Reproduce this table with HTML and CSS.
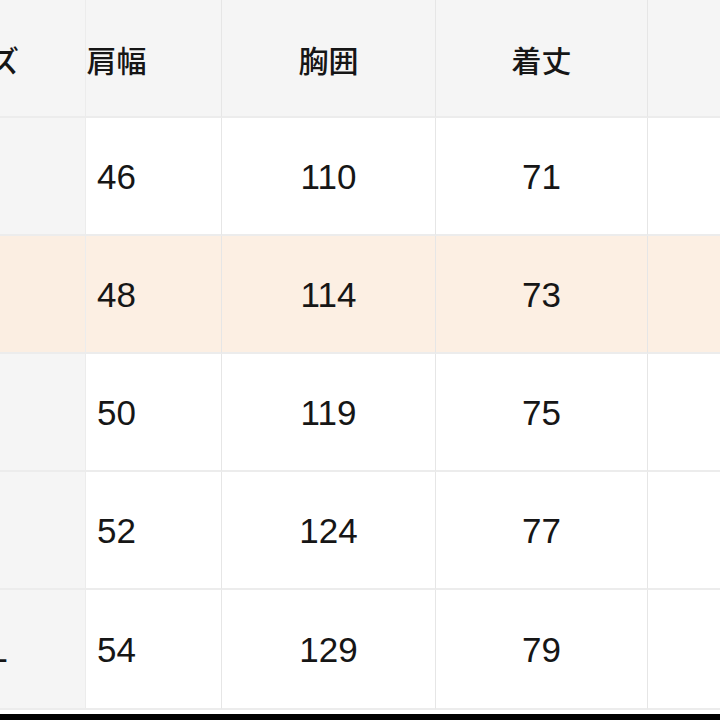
FILE: index.html
```html
<!DOCTYPE html>
<html lang="ja">
<head>
<meta charset="utf-8">
<title>サイズ表</title>
<link rel="stylesheet" href="styles.css">
</head>
<body>
<div class="viewport">
  <div class="table">
    <div class="cell head sticky">サイズ</div>
    <div class="cell head shoulder">肩幅</div>
    <div class="cell head">胸囲</div>
    <div class="cell head">着丈</div>
    <div class="cell head last"></div>

    <div class="cell sticky num">S</div>
    <div class="cell num shoulder">46</div>
    <div class="cell num">110</div>
    <div class="cell num">71</div>
    <div class="cell num last"></div>

    <div class="cell sticky num hl">M</div>
    <div class="cell num shoulder hl">48</div>
    <div class="cell num hl">114</div>
    <div class="cell num hl">73</div>
    <div class="cell num last hl"></div>

    <div class="cell sticky num">L</div>
    <div class="cell num shoulder">50</div>
    <div class="cell num">119</div>
    <div class="cell num">75</div>
    <div class="cell num last"></div>

    <div class="cell sticky num">XL</div>
    <div class="cell num shoulder">52</div>
    <div class="cell num">124</div>
    <div class="cell num">77</div>
    <div class="cell num last"></div>

    <div class="cell sticky num end">XXL</div>
    <div class="cell num shoulder end">54</div>
    <div class="cell num end">129</div>
    <div class="cell num end">79</div>
    <div class="cell num last end"></div>
  </div>
  <div class="gap"></div>
  <div class="bar"></div>
</div>
</body>
</html>
```

FILE: styles.css
```css
html, body {
  margin: 0;
  padding: 0;
  background: #ffffff;
}

.viewport {
  width: 720px;
  height: 720px;
  overflow: hidden;
  display: flex;
  flex-direction: column;
}

.table {
  display: grid;
  grid-template-columns: 222px 136px 214px 212px 208px;
  grid-auto-rows: 118px;
  margin-left: -136px;
  width: 992px;
  color: #161616;
}

.cell {
  display: flex;
  align-items: center;
  justify-content: center;
  box-sizing: border-box;
  white-space: nowrap;
  border-right: 1px solid #e6e6e6;
  border-bottom: 2px solid #ececec;
  background: #ffffff;
}

.head {
  background: #f5f5f5;
  font-family: "Noto Sans CJK JP", "Noto Sans", sans-serif;
  font-size: 30px;
  font-weight: 500;
  padding-top: 2px;
}

.num {
  font-family: "Liberation Sans", Arial, sans-serif;
  font-size: 35px;
  padding-top: 2px;
}

.sticky {
  background: #f5f5f5;
  border-right: 1px solid #ececec;
}

.shoulder {
  padding-right: 74px;
}

.hl {
  background: #fcefe3;
}

.sticky.hl {
  background: #fbeee2;
}

.end {
  height: 120px;
}

.last {
  border-right: none;
}

.gap {
  height: 6px;
  flex: 0 0 auto;
}

.bar {
  flex: 1 1 auto;
  background: #000000;
}
```
